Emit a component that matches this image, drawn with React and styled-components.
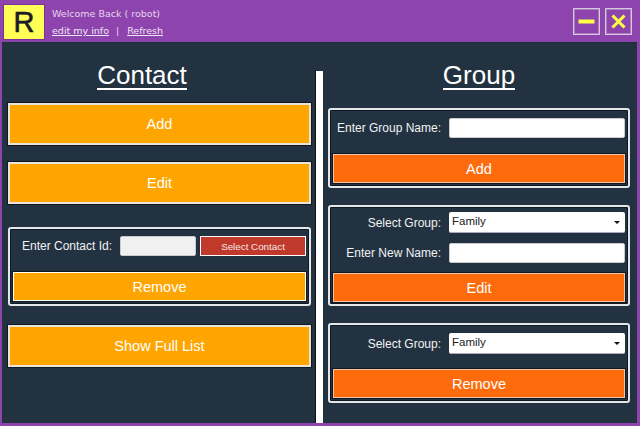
import React from "react";
import styled, { createGlobalStyle } from "styled-components";

const Global = createGlobalStyle`
  html, body { margin: 0; padding: 0; width: 640px; height: 426px; overflow: hidden; background: #8e44ad; }
  * { box-sizing: border-box; }
  #root { width: 640px; height: 426px; font-family: "Liberation Sans", Arial, sans-serif; }
`;

const Window = styled.div`
  width: 640px; height: 426px; display: flex; flex-direction: column; background: #8e44ad;
`;
const TitleBar = styled.header`
  height: 42px; flex: none; display: flex; align-items: flex-start; padding: 4px 8px 0 3px;
`;
const Logo = styled.div`
  width: 42px; height: 36px; background: #ffff55; border: 1px solid #7d2f9e; color: #1a1a2a;
  display: flex; align-items: center; justify-content: center; font-size: 29px; line-height: 36px;
  -webkit-text-stroke: 0.6px #1a1a2a;
`;
const UserInfo = styled.div`
  margin-left: 7px; padding-top: 4px; color: #e6d5ee; flex: 1;
  font-family: "DejaVu Sans", sans-serif; font-size: 9.5px;
`;
const Welcome = styled.div` height: 13px; line-height: 12px; `;
const Links = styled.div` display: flex; margin-top: 4px; line-height: 12px; `;
const LinkText = styled.a` color: #f0e4f5; text-decoration: underline; `;
const Sep = styled.span` margin: 0 8px 0 7px; `;
const WinButton = styled.button`
  width: 27px; height: 27px; margin: 4px 0 0 5px; padding: 0; background: transparent;
  border: 1px solid #d6c8de; box-shadow: inset 0 0 0 1px #a97fc0; display: flex; align-items: center; justify-content: center;
`;
const Main = styled.main`
  flex: none; height: 381px; margin-left: 2px; width: 635px; background: #233241; border-top: 1px solid #1a3038;
  display: flex; align-items: stretch; padding: 0 7px 0 6px;
`;
const Column = styled.section`
  width: 303px; display: flex; flex-direction: column; flex: none;
`;
const RightColumn = styled(Column)` width: 302px; `;
const Heading = styled.h1`
  margin: 0; height: 60px; padding: 17px ${p => p.$shift || 0}px 0 0; text-align: center; color: #fff; font-size: 26px; font-weight: 400; line-height: 30px;
`;
const GroupHeading = styled(Heading)` height: 65px; `;
const HeadingText = styled.span`
  display: inline-block; line-height: 26px; border-bottom: 2px solid #fff;
`;
const Divider = styled.div`
  width: 8px; flex: none; margin: 28px 5px 0 4px; background: #fff; border-left: 1px solid #111;
`;
const BigButton = styled.button`
  display: block; width: 100%; height: 42px; background: #ffa500; border: 2px solid #e8e4dc; color: #fff; box-shadow: 0 0 0 1px #101820;
  font: 14.5px "Liberation Sans", Arial, sans-serif; padding: 0; margin-bottom: ${p => p.$gap || 0}px; flex: none;
`;
const Panel = styled.div`
  width: 100%; flex: none; border: 2px solid #e4e7ea; border-radius: 3px; padding: ${p => p.$top || 8}px 3px 0 3px; height: ${p => p.$h}px; margin-bottom: ${p => p.$gap || 0}px;
  box-shadow: inset 0 0 0 1px #101820;
`;
const Row = styled.div`
  display: flex; align-items: center; height: ${p => p.$h || 20}px; margin-bottom: ${p => p.$gap || 0}px;
`;
const Label = styled.label`
  width: ${p => p.$w}px; flex: none; text-align: right; color: #f0f2f4; font-size: 12px; padding-right: 8px; white-space: nowrap;
`;
const TextBox = styled.div`
  flex: 1; height: 20px; background: ${p => p.$muted ? "#f0f0f0" : "#fff"}; border-radius: 2px; border: 1px solid #c8ccd0;
`;
const IdBox = styled(TextBox)` flex: none; width: 76px; margin-right: 4px; `;
const SelectButton = styled.button`
  width: 106px; height: 20px; padding: 0; background: #c0392b; border: 1px solid #fff; color: #f3e6e4; font: 9.8px "Liberation Sans", Arial, sans-serif;
`;
const Select = styled.div`
  flex: 1; height: 21px; background: #fff; border-radius: 2px; color: #222; font-size: 11.5px; line-height: 18px; padding: 0 4px 0 3px; display: flex; justify-content: space-between; border-bottom: 1px solid #aab;
`;
const Caret = styled.span`
  width: 0; height: 0; border-left: 3px solid transparent; border-right: 3px solid transparent; border-top: 3px solid #111; margin: 9px 1px 0 0;
`;
const ActionButton = styled.button`
  display: block; width: 100%; height: 29px; padding: 0; background: ${p => p.$c}; border: 1px solid ${p => p.$edge}; box-shadow: 0 0 0 1px #101820; color: #fff;
  font: 14.5px "Liberation Sans", Arial, sans-serif;
`;

export default function App() {
  return (
    <Window>
      <Global />
      <TitleBar>
        <Logo>R</Logo>
        <UserInfo>
          <Welcome>Welcome Back ( robot)</Welcome>
          <Links>
            <LinkText>edit my info</LinkText>
            <Sep>|</Sep>
            <LinkText>Refresh</LinkText>
          </Links>
        </UserInfo>
        <WinButton aria-label="Minimize">
          <svg width="17" height="17" viewBox="0 0 17 17"><rect x="0.5" y="6.5" width="16" height="4" fill="#ffff44" /></svg>
        </WinButton>
        <WinButton aria-label="Close">
          <svg width="17" height="17" viewBox="0 0 17 17"><path d="M2.5 2.5 L14.5 14.5 M14.5 2.5 L2.5 14.5" stroke="#ffff44" strokeWidth="3" fill="none" /></svg>
        </WinButton>
      </TitleBar>
      <Main>
        <Column>
          <Heading $shift={35}><HeadingText>Contact</HeadingText></Heading>
          <BigButton $gap={17}>Add</BigButton>
          <BigButton $gap={23}>Edit</BigButton>
          <Panel $h={79} $gap={19} $top={7}>
            <Row $gap={16}>
              <Label $w={107}>Enter Contact Id:</Label>
              <IdBox $muted />
              <SelectButton>Select Contact</SelectButton>
            </Row>
            <ActionButton $c="#ffa500" $edge="#fff">Remove</ActionButton>
          </Panel>
          <BigButton>Show Full List</BigButton>
        </Column>
        <Divider />
        <RightColumn>
          <GroupHeading><HeadingText>Group</HeadingText></GroupHeading>
          <Panel $h={80} $gap={17} $top={8}>
            <Row $gap={16}>
              <Label $w={116}>Enter Group Name:</Label>
              <TextBox />
            </Row>
            <ActionButton $c="#fd6b0d" $edge="#f6c3a8">Add</ActionButton>
          </Panel>
          <Panel $h={101} $gap={17} $top={5}>
            <Row $h={21} $gap={10}>
              <Label $w={116}>Select Group:</Label>
              <Select>Family<Caret /></Select>
            </Row>
            <Row $gap={10}>
              <Label $w={116}>Enter New Name:</Label>
              <TextBox />
            </Row>
            <ActionButton $c="#fd6b0d" $edge="#f6c3a8">Edit</ActionButton>
          </Panel>
          <Panel $h={80} $top={8}>
            <Row $h={21} $gap={15}>
              <Label $w={116}>Select Group:</Label>
              <Select>Family<Caret /></Select>
            </Row>
            <ActionButton $c="#fd6b0d" $edge="#f6c3a8">Remove</ActionButton>
          </Panel>
        </RightColumn>
      </Main>
    </Window>
  );
}
